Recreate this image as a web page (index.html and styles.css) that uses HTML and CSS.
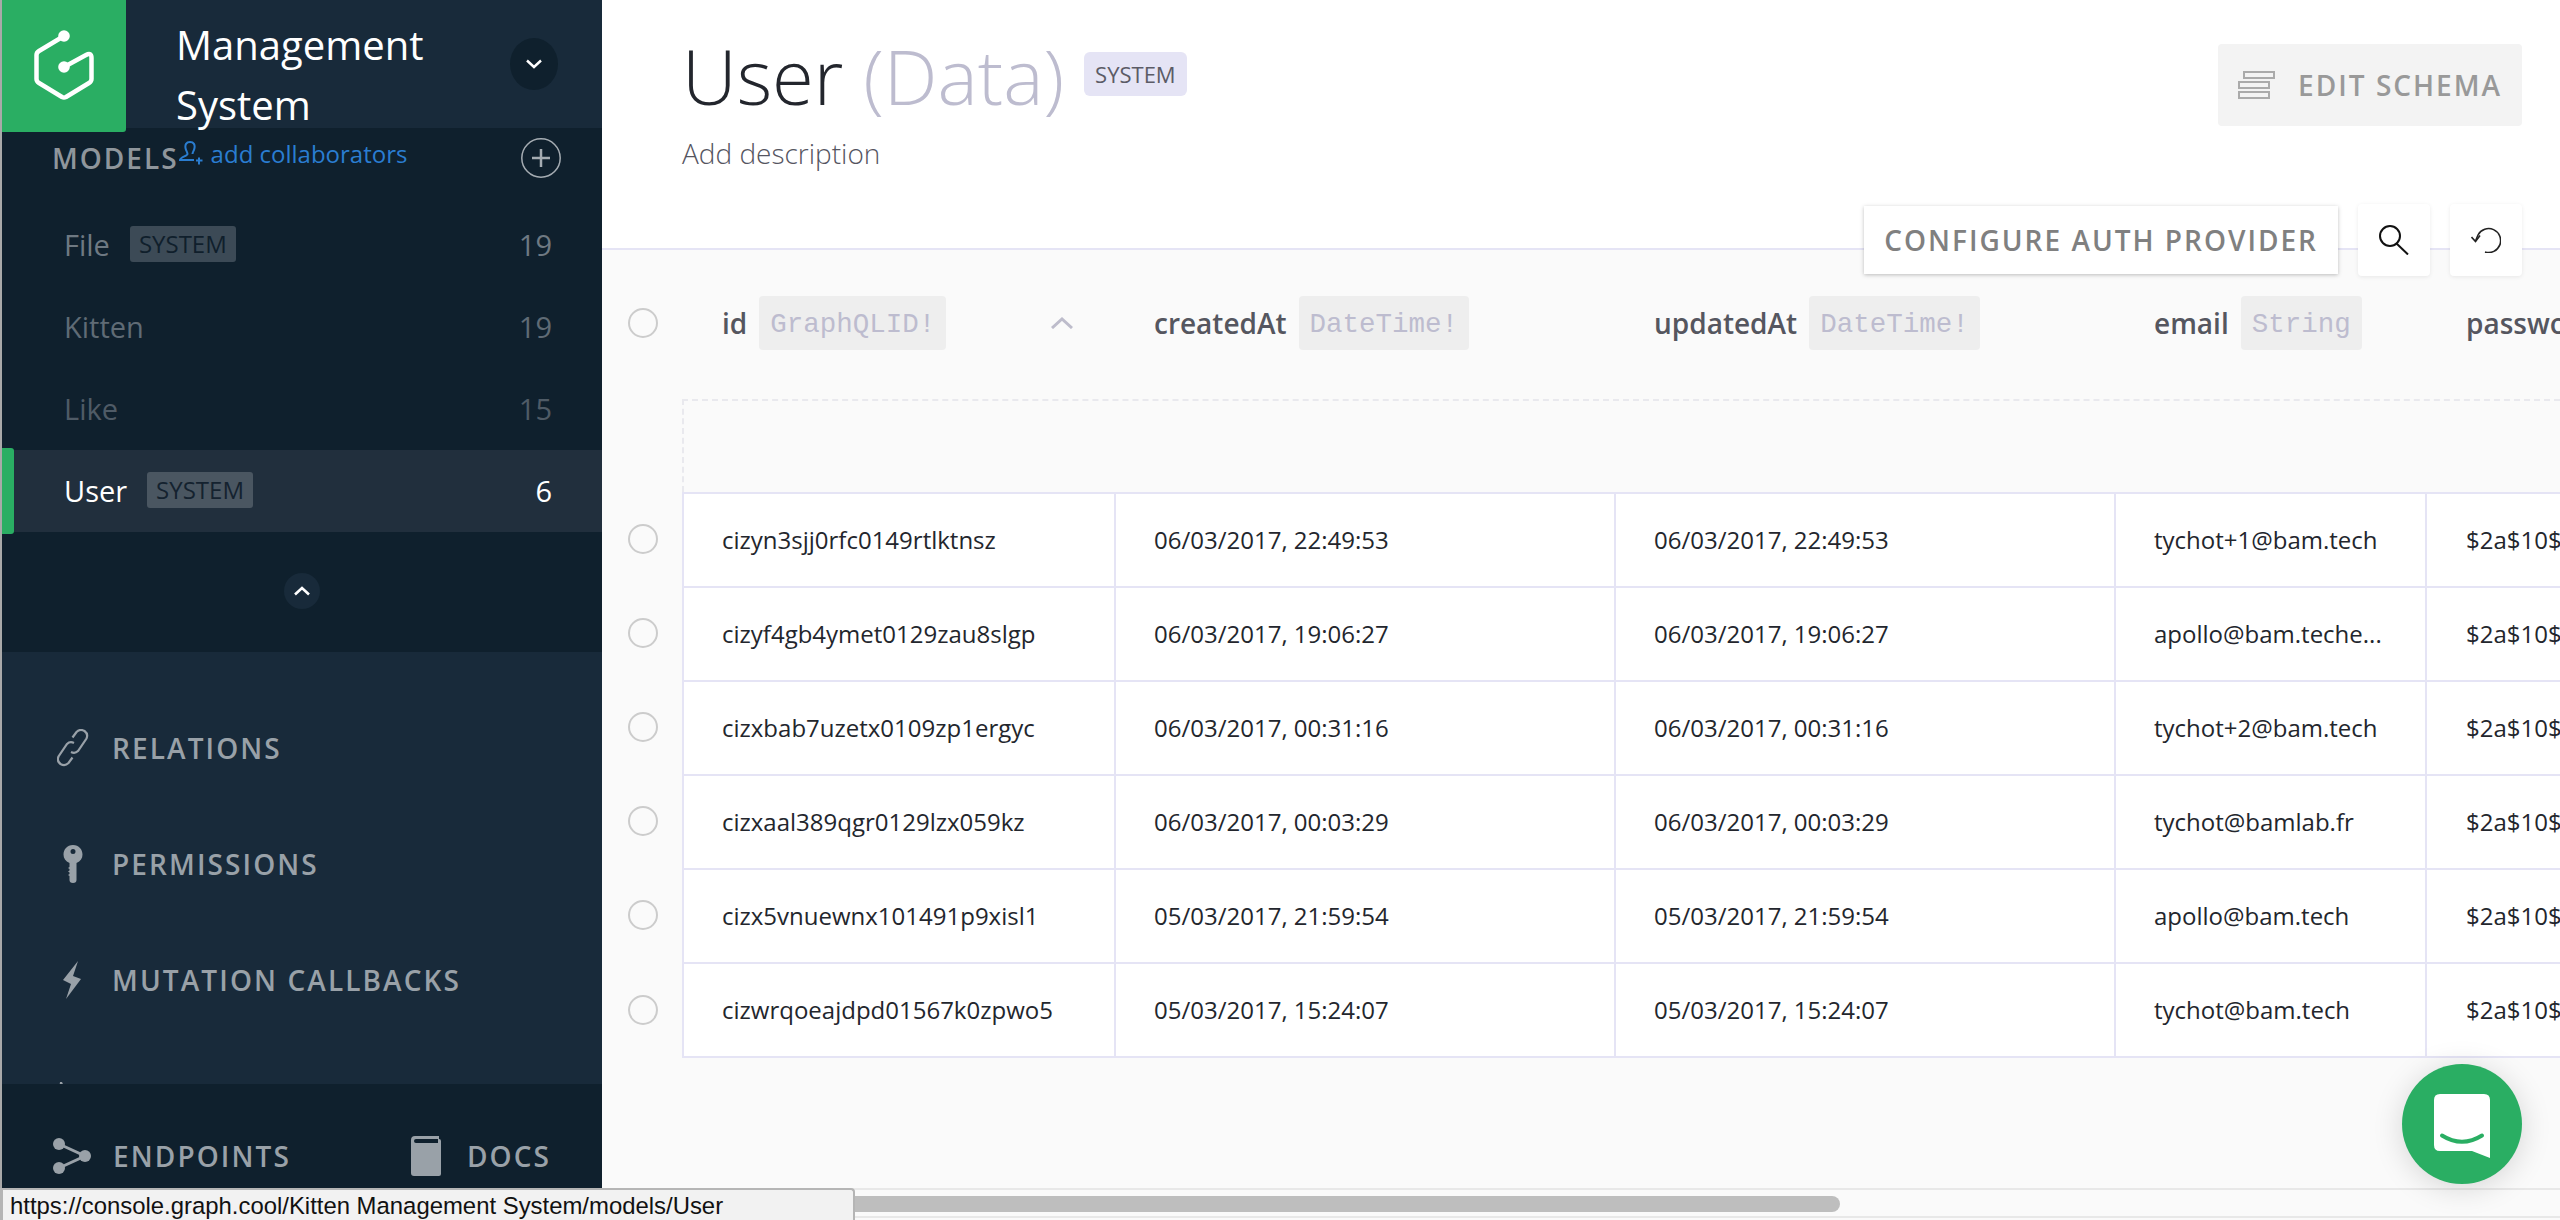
FILE: index.html

```html
<!DOCTYPE html>
<html lang="en">
<head>
<meta charset="UTF-8">
<meta name="viewport" content="width=device-width, initial-scale=1.0">
<title>User (Data)</title>
<link rel="stylesheet" href="styles.css">
</head>
<body>

<aside class="sidebar">
    <header class="project">
        <div class="logo">
            <svg width="62" height="72" viewBox="0 0 62 72" fill="none" stroke="#fff" stroke-width="4.500" stroke-linecap="round" stroke-linejoin="round">
                <path d="M31 6 L6 21 Q3.500 22.500 3.500 25 V49 Q3.500 51.500 6 53 L29 67 Q31 68 33 67 L56 53 Q58.500 51.500 58.500 49 V28 Q58.500 22 53 25 L31 37"/>
                <circle cx="31" cy="6" r="5.800" fill="#fff" stroke="none"/>
                <circle cx="31" cy="37" r="5.800" fill="#fff" stroke="none"/>
            </svg>
        </div>
        <div class="project-name">Kitten<br>Management<br>System</div>
        <button class="round-btn project-toggle">
            <svg width="16" height="10" viewBox="0 0 16 10" fill="none" stroke="#fff" stroke-width="2.400"><path d="M1 1.500 L8 8 L15 1.500"/></svg>
        </button>
    </header>

    <section class="models">
        <div class="models-head">
            <span class="models-title">MODELS</span>
            <a class="collab">
                <svg width="24" height="24" viewBox="0 0 24 24" fill="none" stroke="#2a7dd1" stroke-width="2"><path d="M11 1 C7 1 6 4 6.500 7 C7 10 8.500 11 8.500 13 C8.500 15 1.500 16 1 19 H15 M17 19.500 H23.500 M20 16.500 V23.500 M13.500 13 C13.500 11 15 10 15.500 7 C16 4 15 1 11 1"/></svg>
                add collaborators
            </a>
            <span class="add-model">
                <svg width="40" height="40" viewBox="0 0 40 40" fill="none" stroke="#a5acb2" stroke-width="1.500"><circle cx="20" cy="20" r="19.200"/><path d="M20 11 V29 M11 20 H29" stroke-width="2.500"/></svg>
            </span>
        </div>
        <ul class="model-list">
            <li class="model-row"><span class="model-name">File</span><span class="tag">SYSTEM</span><span class="count">19</span></li>
            <li class="model-row"><span class="model-name">Kitten</span><span class="count">19</span></li>
            <li class="model-row"><span class="model-name">Like</span><span class="count">15</span></li>
            <li class="model-row active"><span class="model-name">User</span><span class="tag">SYSTEM</span><span class="count">6</span></li>
        </ul>
        <div class="collapse">
            <button class="round-btn collapse-btn">
                <svg width="16" height="10" viewBox="0 0 16 10" fill="none" stroke="#fff" stroke-width="2.600"><path d="M1 8.500 L8 2 L15 8.500"/></svg>
            </button>
        </div>
    </section>

    <nav class="side-nav">
        <a class="nav-item">
            <svg width="32" height="38" viewBox="0 0 32 38" fill="none" stroke="#99a1a8" stroke-width="2.200"><path d="M15.500 8.500 L19.500 3 Q23 -0.500 27.500 2 Q31.500 5 29.500 9.500 L21 22 Q18 25 14 23"/><path d="M15.500 28.500 L11.500 34 Q8 37.500 3.500 35 Q-0.500 32 1.500 27.500 L10 15 Q13 12 17 14"/></svg>
            RELATIONS
        </a>
        <a class="nav-item">
            <svg width="32" height="38" viewBox="0 0 32 38"><path fill="#99a1a8" fill-rule="evenodd" d="M16 0 C22 0 25.500 4.500 25.500 9.500 C25.500 13.500 23.500 16 19.500 18 V35 Q19.500 38 16 38 Q12.500 38 12.500 35 V31 L11 30 L12.500 29 V27.500 L11 26.500 L12.500 25.500 V24 L11 23 L12.500 22 V18 C8.500 16 6.500 13.500 6.500 9.500 C6.500 4.500 10 0 16 0 Z M16 4 A2.500 2.500 0 1 0 16 9 A2.500 2.500 0 1 0 16 4 Z"/></svg>
            PERMISSIONS
        </a>
        <a class="nav-item">
            <svg width="32" height="38" viewBox="0 0 32 38"><path fill="#99a1a8" d="M21 0 L6 19 L14 23 L9 38 L24 18 L16 15 Z"/></svg>
            MUTATION CALLBACKS
        </a>
        <a class="nav-item">
            <svg width="32" height="38" viewBox="0 0 32 38"><path fill="#99a1a8" d="M3 5 H5 L8 12 H2 Z"/></svg>
        </a>
    </nav>

    <footer class="side-foot">
        <a class="foot-item">
            <svg width="38" height="36" viewBox="0 0 38 36" fill="none" stroke="#99a1a8" stroke-width="3"><path d="M6 6 L32 18 L6 30"/><circle cx="6" cy="6" r="6" fill="#99a1a8" stroke="none"/><circle cx="32" cy="18" r="6" fill="#99a1a8" stroke="none"/><circle cx="6" cy="30" r="6" fill="#99a1a8" stroke="none"/></svg>
            ENDPOINTS
        </a>
        <a class="foot-item docs">
            <svg width="30" height="40" viewBox="0 0 30 40"><path fill="#99a1a8" d="M4 0 H28 V3 H5 Q3 3 3 5 Q3 7 5 7 H27 V3 H28 Q30 3 30 5 V38 Q30 40 28 40 H3 Q0 40 0 37 V4 Q0 0 4 0 Z"/></svg>
            DOCS
        </a>
    </footer>
</aside>

<main class="main">
    <header class="page-head">
        <div class="page-title-wrap">
            <div class="page-title-line">
                <h1 class="page-title">User <span class="muted">(Data)</span></h1>
                <span class="system-badge">SYSTEM</span>
            </div>
            <div class="description">Add description</div>
        </div>
        <button class="edit-schema">
            <svg width="37" height="28" viewBox="0 0 37 28" fill="none" stroke="#aaa" stroke-width="2"><rect x="6" y="1" width="30" height="6"/><rect x="1" y="11" width="30" height="6"/><rect x="1" y="21" width="30" height="6"/></svg>
            EDIT SCHEMA
        </button>
    </header>

    <div class="toolbar">
        <button class="tool-auth">CONFIGURE AUTH PROVIDER</button>
        <button class="tool-icon">
            <svg width="30" height="30" viewBox="0 0 30 30" fill="none" stroke="#111" stroke-width="2"><circle cx="11" cy="11" r="10"/><path d="M17 18 L29 29.500"/></svg>
        </button>
        <button class="tool-icon">
            <svg width="30" height="26" viewBox="0 0 30 26" fill="none" stroke="#222" stroke-width="1.600"><path d="M4.500 14 L7 8 A12 12 0 1 1 14 25"/><path d="M0.500 10 L4.500 14.500 L9 8.500"/></svg>
        </button>
    </div>

    <div class="grid">
        <div class="grid-head">
            <div class="check-col"><span class="radio"></span></div>
            <div class="head-cell col-id"><b>id</b><code class="type">GraphQLID!</code><svg class="sort" width="22" height="12" viewBox="0 0 22 12" fill="none" stroke="#bdbccb" stroke-width="3"><path d="M1 11 L11 2 L21 11"/></svg></div>
            <div class="head-cell col-date"><b>createdAt</b><code class="type">DateTime!</code></div>
            <div class="head-cell col-date"><b>updatedAt</b><code class="type">DateTime!</code></div>
            <div class="head-cell col-email"><b>email</b><code class="type">String</code></div>
            <div class="head-cell col-pass"><b>password</b></div>
        </div>
        <div class="new-row"></div>
        <div class="row"><div class="check-col"><span class="radio"></span></div><div class="cell col-id">cizyn3sjj0rfc0149rtlktnsz</div><div class="cell col-date">06/03/2017, 22:49:53</div><div class="cell col-date">06/03/2017, 22:49:53</div><div class="cell col-email">tychot+1@bam.tech</div><div class="cell col-pass">$2a$10$VfqLm0yTgH</div></div>
        <div class="row"><div class="check-col"><span class="radio"></span></div><div class="cell col-id">cizyf4gb4ymet0129zau8slgp</div><div class="cell col-date">06/03/2017, 19:06:27</div><div class="cell col-date">06/03/2017, 19:06:27</div><div class="cell col-email">apollo@bam.teche...</div><div class="cell col-pass">$2a$10$VfqLm0yTgH</div></div>
        <div class="row"><div class="check-col"><span class="radio"></span></div><div class="cell col-id">cizxbab7uzetx0109zp1ergyc</div><div class="cell col-date">06/03/2017, 00:31:16</div><div class="cell col-date">06/03/2017, 00:31:16</div><div class="cell col-email">tychot+2@bam.tech</div><div class="cell col-pass">$2a$10$VfqLm0yTgH</div></div>
        <div class="row"><div class="check-col"><span class="radio"></span></div><div class="cell col-id">cizxaal389qgr0129lzx059kz</div><div class="cell col-date">06/03/2017, 00:03:29</div><div class="cell col-date">06/03/2017, 00:03:29</div><div class="cell col-email">tychot@bamlab.fr</div><div class="cell col-pass">$2a$10$VfqLm0yTgH</div></div>
        <div class="row"><div class="check-col"><span class="radio"></span></div><div class="cell col-id">cizx5vnuewnx101491p9xisl1</div><div class="cell col-date">05/03/2017, 21:59:54</div><div class="cell col-date">05/03/2017, 21:59:54</div><div class="cell col-email">apollo@bam.tech</div><div class="cell col-pass">$2a$10$VfqLm0yTgH</div></div>
        <div class="row"><div class="check-col"><span class="radio"></span></div><div class="cell col-id">cizwrqoeajdpd01567k0zpwo5</div><div class="cell col-date">05/03/2017, 15:24:07</div><div class="cell col-date">05/03/2017, 15:24:07</div><div class="cell col-email">tychot@bam.tech</div><div class="cell col-pass">$2a$10$VfqLm0yTgH</div></div>
    </div>

    <div class="h-scroll"><div class="h-thumb"></div></div>
</main>

<button class="chat">
    <svg width="56" height="64" viewBox="0 0 56 64"><path fill="#fff" d="M6 0 H50 Q56 0 56 6 V64 L38 57 H6 Q0 57 0 51 V6 Q0 0 6 0 Z"/><path d="M8 41.500 Q28 54 48 41.500" fill="none" stroke="#2aae63" stroke-width="4" stroke-linecap="round"/></svg>
</button>

<div class="status-url">https://console.graph.cool/Kitten Management System/models/User</div>

</body>
</html>
```

FILE: styles.css

```css
* {
    box-sizing: border-box;
}

html, body {
    height: 100%;
}

body {
    display: flex;
    margin: 0;
    overflow: hidden;
    background-color: #fafafa;
    font-family: "Open Sans", sans-serif;
    color: #23262d;
}

button {
    border: 0;
    padding: 0;
    font-family: inherit;
    cursor: pointer;
}

ul {
    list-style: none;
    margin: 0;
    padding: 0;
}

/* sidebar */

.sidebar {
    display: flex;
    flex-direction: column;
    flex: none;
    width: 602px;
    height: 100%;
    border-left: 2px solid #a9a9a9;
    background-color: #182a3a;
}

.project {
    display: flex;
    flex: none;
    align-items: flex-start;
    position: relative;
    z-index: 1;
    height: 128px;
}

.logo {
    display: flex;
    align-items: center;
    justify-content: center;
    flex: none;
    width: 124px;
    height: 132px;
    border-bottom-right-radius: 3px;
    background-color: #2aae63;
}

.project-name {
    flex: 1;
    margin: -45px 0 0 50px;
    font-size: 40px;
    line-height: 60px;
    color: #fff;
}

.round-btn {
    display: flex;
    align-items: center;
    justify-content: center;
    border-radius: 50%;
}

.project-toggle {
    flex: none;
    width: 48px;
    height: 52px;
    margin: 38px 44px 0 0;
    background-color: #0f202d;
}

.models {
    display: flex;
    flex-direction: column;
    flex: none;
    height: 524px;
    background-color: #0f202d;
}

.models-head {
    display: flex;
    align-items: center;
    height: 60px;
    padding: 0 41px 0 50px;
}

.models-title {
    font-size: 28px;
    font-weight: 600;
    letter-spacing: 2px;
    color: #8f969c;
}

.collab {
    display: flex;
    align-items: center;
    gap: 8px;
    margin: -10px 0 0 0;
    font-size: 24px;
    color: #2a7dd1;
}

.add-model {
    display: flex;
    margin-left: auto;
}

.model-list {
    margin-top: 16px;
}

.model-row {
    display: flex;
    align-items: center;
    height: 82px;
    padding: 0 50px 2px 62px;
    font-size: 29px;
    color: #6e7982;
}

.model-row:nth-child(2) {
    color: #5f6b75;
}

.model-row:nth-child(3) {
    color: #4f5b66;
}

.tag {
    margin-left: 20px;
    padding: 0 9px;
    border-radius: 3px;
    font-size: 24px;
    line-height: 36px;
    background-color: #3c4a56;
    color: #101f2c;
}

.count {
    margin-left: auto;
}

.model-row.active {
    position: relative;
    background-color: #212f3d;
    color: #fff;
}

.model-row.active .tag {
    background-color: #4a5661;
    color: #14222f;
}

.model-row.active::before {
    content: "";
    position: absolute;
    left: 0;
    top: -2px;
    bottom: -2px;
    width: 12px;
    border-radius: 0 3px 3px 0;
    background-color: #2aae63;
}

.collapse {
    display: flex;
    justify-content: center;
    margin-top: 41px;
}

.collapse-btn {
    width: 36px;
    height: 36px;
    background-color: #182a3a;
}

.side-nav {
    display: flex;
    flex-direction: column;
    flex: none;
    height: 432px;
    padding-top: 38px;
    overflow: hidden;
}

.nav-item, .foot-item {
    display: flex;
    flex: none;
    align-items: center;
    font-size: 28px;
    font-weight: 600;
    letter-spacing: 2.100px;
    color: #99a1a8;
}

.nav-item {
    gap: 23px;
    height: 116px;
    padding-left: 55px;
}

.side-foot {
    display: flex;
    flex: 1;
    align-items: center;
    justify-content: space-between;
    padding: 8px 51px 0 51px;
    background-color: #0f202d;
}

.foot-item {
    gap: 22px;
}

.foot-item.docs {
    gap: 26px;
}

/* main area */

.main {
    display: flex;
    flex-direction: column;
    position: relative;
    flex: 1;
    min-width: 0;
}

.page-head {
    display: flex;
    flex: none;
    justify-content: space-between;
    height: 250px;
    padding: 44px 38px 0 80px;
    border-bottom: 2px solid #e5e4f5;
    background-color: #fff;
}

.page-title-line {
    display: flex;
    align-items: flex-start;
    gap: 20px;
}

.page-title {
    margin: -18px 0 0 0;
    font-size: 76px;
    line-height: 100px;
    font-weight: 300;
    color: #23262d;
}

.muted {
    color: #bdbccf;
}

.system-badge {
    margin-top: 8px;
    padding: 0 11px;
    border-radius: 6px;
    font-size: 22px;
    line-height: 44px;
    background-color: #e5e4f5;
    color: #5b5b66;
}

.description {
    margin-top: 8px;
    font-size: 28px;
    font-weight: 300;
    color: #55555f;
}

.edit-schema {
    display: flex;
    align-items: center;
    gap: 23px;
    height: 82px;
    padding: 0 20px;
    border-radius: 4px;
    font-size: 28px;
    font-weight: 600;
    letter-spacing: 2px;
    background-color: #f3f3f3;
    color: #999;
}

.toolbar {
    display: flex;
    align-items: center;
    justify-content: flex-end;
    gap: 20px;
    position: absolute;
    top: 204px;
    right: 38px;
    height: 72px;
}

.tool-auth {
    height: 68px;
    padding: 0 20px;
    font-size: 28px;
    font-weight: 600;
    letter-spacing: 2px;
    background-color: #fff;
    color: #808080;
    box-shadow: 0 1px 4px rgba(0, 0, 0, 0.25);
}

.tool-icon {
    display: flex;
    align-items: center;
    justify-content: center;
    width: 72px;
    height: 72px;
    border-radius: 4px;
    background-color: #fff;
    box-shadow: 0 1px 4px rgba(0, 0, 0, 0.08);
}

/* table */

.grid {
    flex: 1;
    min-height: 0;
    overflow: hidden;
}

.grid-head {
    display: flex;
    align-items: center;
    height: 92px;
    margin-top: 27px;
}

.check-col {
    display: flex;
    align-items: center;
    justify-content: center;
    flex: none;
    width: 80px;
    padding-left: 2px;
}

.radio {
    width: 30px;
    height: 30px;
    border: 2px solid #ccc;
    border-radius: 50%;
}

.col-id { width: 434px; }
.col-date { width: 500px; }
.col-email { width: 311px; }
.col-pass { width: 400px; }

.head-cell, .cell {
    display: flex;
    flex: none;
    align-items: center;
    white-space: nowrap;
    overflow: hidden;
}

.head-cell {
    gap: 12px;
    height: 54px;
    padding-left: 38px;
    font-size: 28px;
    color: #55565f;
}

.head-cell.col-id {
    padding-left: 40px;
}

.head-cell.col-pass, .cell.col-pass {
    padding-left: 39px;
}

.head-cell b {
    font-weight: 600;
}

.type {
    padding: 3px 11px 0 11px;
    border-radius: 4px;
    font-family: "Liberation Mono", monospace;
    font-size: 27.500px;
    line-height: 51px;
    background-color: #eee;
    color: #bdbccf;
}

.sort {
    margin-left: 93px;
}

.new-row {
    height: 93px;
    margin: 30px 0 0 80px;
    border-top: 2px dashed #e9e9ee;
    border-left: 2px dashed #e9e9ee;
}

.row {
    display: flex;
    height: 94px;
}

.cell {
    height: 94px;
    padding: 0 0 2px 38px;
    border-top: 2px solid #e5e4f5;
    border-right: 2px solid #e5e4f5;
    font-size: 24px;
    background-color: #fff;
}

.cell.col-id {
    border-left: 2px solid #e5e4f5;
}

.row:last-child .cell {
    height: 96px;
    padding-bottom: 2px;
    border-bottom: 2px solid #e5e4f5;
}

.row:last-child {
    height: 96px;
}

/* bottom overlays */

.h-scroll {
    flex: none;
    height: 30px;
    margin-bottom: 2px;
    padding-top: 6px;
    border-top: 2px solid #e8e8e8;
    border-bottom: 2px solid #e8e8e8;
}

.h-thumb {
    width: 1238px;
    height: 16px;
    border-radius: 8px;
    background-color: #bebebe;
}

.chat {
    display: flex;
    align-items: center;
    justify-content: center;
    position: absolute;
    left: 2402px;
    top: 1064px;
    width: 120px;
    height: 120px;
    padding-top: 4px;
    border-radius: 50%;
    background-color: #2aae63;
    box-shadow: 0 4px 30px rgba(0, 0, 0, 0.15);
}

.status-url {
    position: absolute;
    left: 0;
    bottom: 0;
    width: 855px;
    height: 32px;
    padding-left: 7px;
    border-top: 2px solid #b5b5b5;
    border-left: 3px solid #b5b5b5;
    border-right: 2px solid #b5b5b5;
    border-radius: 0 4px 0 0;
    font-family: "Liberation Sans", sans-serif;
    font-size: 23.900px;
    line-height: 32px;
    background-color: #f2f2f2;
    color: #111;
}
```
